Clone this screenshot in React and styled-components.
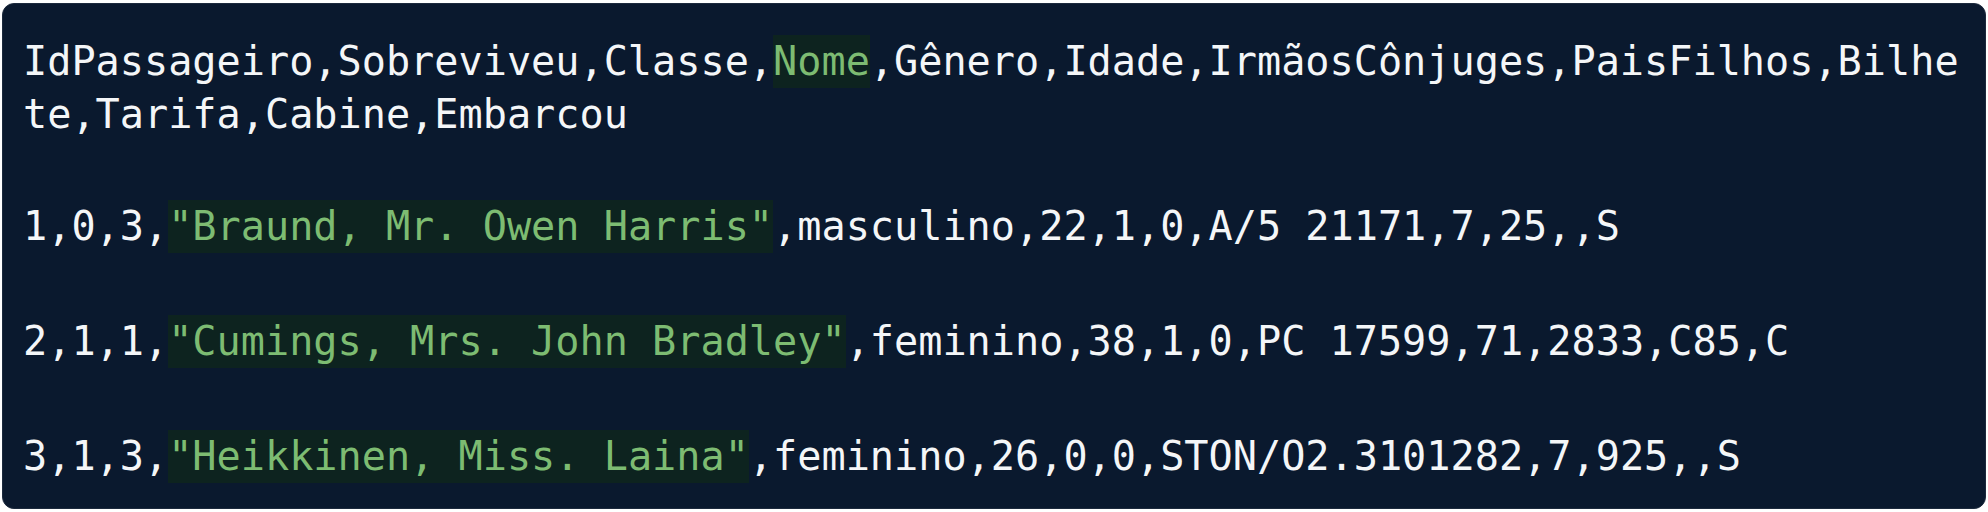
import React from "react";
import styled, {createGlobalStyle} from "styled-components";

const GlobalStyle = createGlobalStyle`
  html, body {
    margin: 0;
    padding: 0;
    background: #ffffff;
  }
`;

const Page = styled.div`
  padding: 3px 2px 3px 2px;
  box-sizing: border-box;
`;

const CodeBlock = styled.pre`
  margin: 0;
  width: 1984px;
  height: 506px;
  box-sizing: border-box;
  padding: 31px 14px 0 20px;
  background: #0a192e;
  border: 1px solid #1c2a3d;
  border-radius: 12px;
  font-family: "DejaVu Sans Mono", "Liberation Mono", monospace;
  font-size: 40.2px;
  color: #f4f6f8;
  white-space: pre-wrap;
  word-break: break-all;
  overflow: hidden;
`;

const Header = styled.div`
  line-height: 53px;
  margin-bottom: 59px;
`;

const Row = styled.div`
  line-height: 53px;
  & + & {
    margin-top: 62px;
  }
`;

const Str = styled.span`
  display: inline-block;
  line-height: 53px;
  background: #0d231f;
  color: #7dbc72;
`;

const rows = [
  {pre: "1,0,3,", name: "\"Braund, Mr. Owen Harris\"", post: ",masculino,22,1,0,A/5 21171,7,25,,S"},
  {pre: "2,1,1,", name: "\"Cumings, Mrs. John Bradley\"", post: ",feminino,38,1,0,PC 17599,71,2833,C85,C"},
  {pre: "3,1,3,", name: "\"Heikkinen, Miss. Laina\"", post: ",feminino,26,0,0,STON/O2.3101282,7,925,,S"},
];

const App = () => {
  return (
    <Page>
      <GlobalStyle />
      <CodeBlock>
        <Header>
          IdPassageiro,Sobreviveu,Classe,<Str>Nome</Str>,Gênero,Idade,IrmãosCônjuges,PaisFilhos,Bilhete,Tarifa,Cabine,Embarcou
        </Header>
        {rows.map(r => (
          <Row key={r.pre}>
            {r.pre}
            <Str>{r.name}</Str>
            {r.post}
          </Row>
        ))}
      </CodeBlock>
    </Page>
  );
};

export default App;
